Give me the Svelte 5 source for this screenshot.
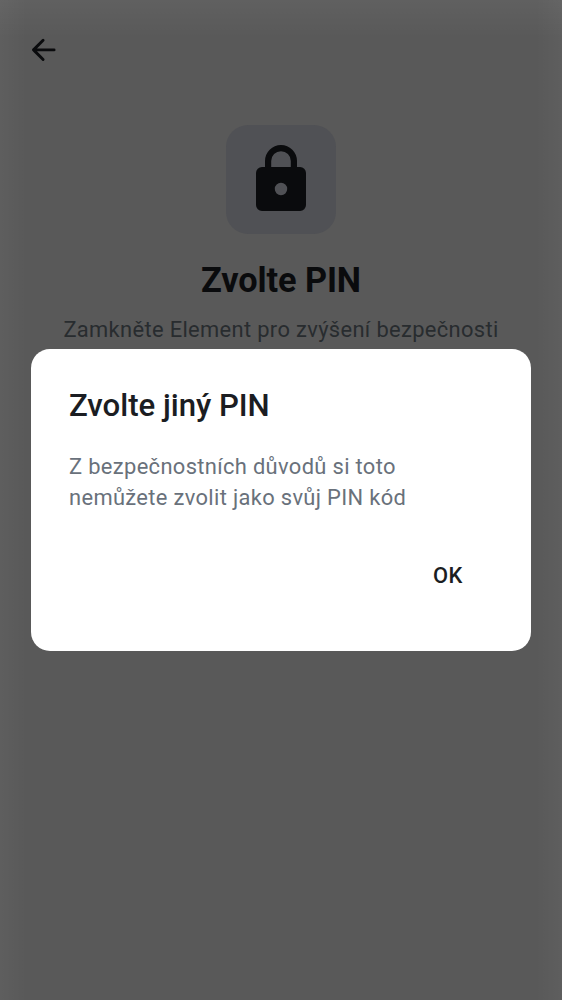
<script>
  let open = $state(true);
</script>

<div class="screen">
  <header>
    <button class="back" aria-label="Zpět">
      <svg width="26" height="24" viewBox="0 0 26 24" fill="none" stroke="#0a0b0d" stroke-width="2.9" stroke-linecap="round" stroke-linejoin="round">
        <path d="M12.1 2.3 2.5 11.9l9.6 9.6M2.5 11.9h20.6" />
      </svg>
    </button>
  </header>
  <main>
    <div class="tile">
      <svg width="50" height="66" viewBox="0 0 50 66">
        <path d="M12.1 25V16a12.9 12.9 0 0 1 25.8 0v9" fill="none" stroke="#0a0b0d" stroke-width="6.2" />
        <path fill="#0a0b0d" fill-rule="evenodd" d="M6 22h38a6 6 0 0 1 6 6v32a6 6 0 0 1-6 6H6a6 6 0 0 1-6-6V28a6 6 0 0 1 6-6Zm19 15.8a6.2 6.2 0 1 0 0 12.4 6.2 6.2 0 0 0 0-12.4Z" />
      </svg>
    </div>
    <h1>Zvolte PIN</h1>
    <p class="subtitle">Zamkněte Element pro zvýšení bezpečnosti</p>
  </main>
  {#if open}
    <div class="overlay">
      <div class="dialog" role="alertdialog" aria-modal="true" aria-labelledby="dialog-title">
        <h2 id="dialog-title">Zvolte jiný PIN</h2>
        <p>Z bezpečnostních důvodů si toto nemůžete zvolit jako svůj PIN kód</p>
        <div class="actions">
          <button class="ok" onclick={() => (open = false)}>OK</button>
        </div>
      </div>
    </div>
  {/if}
</div>

<style>
  .screen {
    position: relative;
    height: 1000px;
    overflow: hidden;
    box-sizing: border-box;
    background:
      linear-gradient(to bottom, rgba(255, 255, 255, 0.045), transparent 38px),
      linear-gradient(to right, rgba(255, 255, 255, 0.03), transparent 27px),
      linear-gradient(to left, rgba(255, 255, 255, 0.03), transparent 27px),
      #595959;
    font-family: Roboto, sans-serif;
  }
  button {
    border: 0;
    padding: 0;
    background: none;
    font-family: inherit;
  }
  svg {
    display: block;
  }
  header {
    height: 62px;
    padding: 38px 0 0 31px;
    box-sizing: border-box;
  }
  main {
    display: flex;
    flex-direction: column;
    align-items: center;
    padding-top: 63px;
  }
  .tile {
    display: flex;
    justify-content: center;
    width: 110px;
    height: 109px;
    padding-top: 20px;
    box-sizing: border-box;
    border-radius: 22px;
    background: #505155;
  }
  h1 {
    margin: 25px 0 0;
    font-size: 34.3px;
    line-height: 42px;
    font-weight: 700;
    letter-spacing: -0.1px;
    color: #0a0b0d;
    white-space: nowrap;
  }
  .subtitle {
    margin: 13px 0 0;
    font-size: 21.9px;
    line-height: 32px;
    letter-spacing: 0.34px;
    color: #282c2f;
    white-space: nowrap;
  }
  .overlay {
    position: absolute;
    inset: 0;
    display: flex;
    align-items: center;
    justify-content: center;
  }
  .dialog {
    width: 500px;
    height: 301.5px;
    padding: 38px;
    box-sizing: border-box;
    border-radius: 19px;
    background: #fff;
  }
  h2 {
    margin: 0;
    font-size: 31.2px;
    line-height: 38px;
    font-weight: 500;
    letter-spacing: -0.03px;
    color: #1b1d22;
  }
  .dialog p {
    width: 370px;
    margin: 26px 0 0;
    font-size: 21.9px;
    line-height: 31px;
    letter-spacing: 0.34px;
    color: #69717b;
  }
  .actions {
    display: flex;
    justify-content: flex-end;
    padding: 31px 11px 0 0;
  }
  .ok {
    width: 68px;
    height: 62px;
    font-size: 21.9px;
    font-weight: 500;
    letter-spacing: 0.5px;
    color: #1b1d22;
  }
</style>
